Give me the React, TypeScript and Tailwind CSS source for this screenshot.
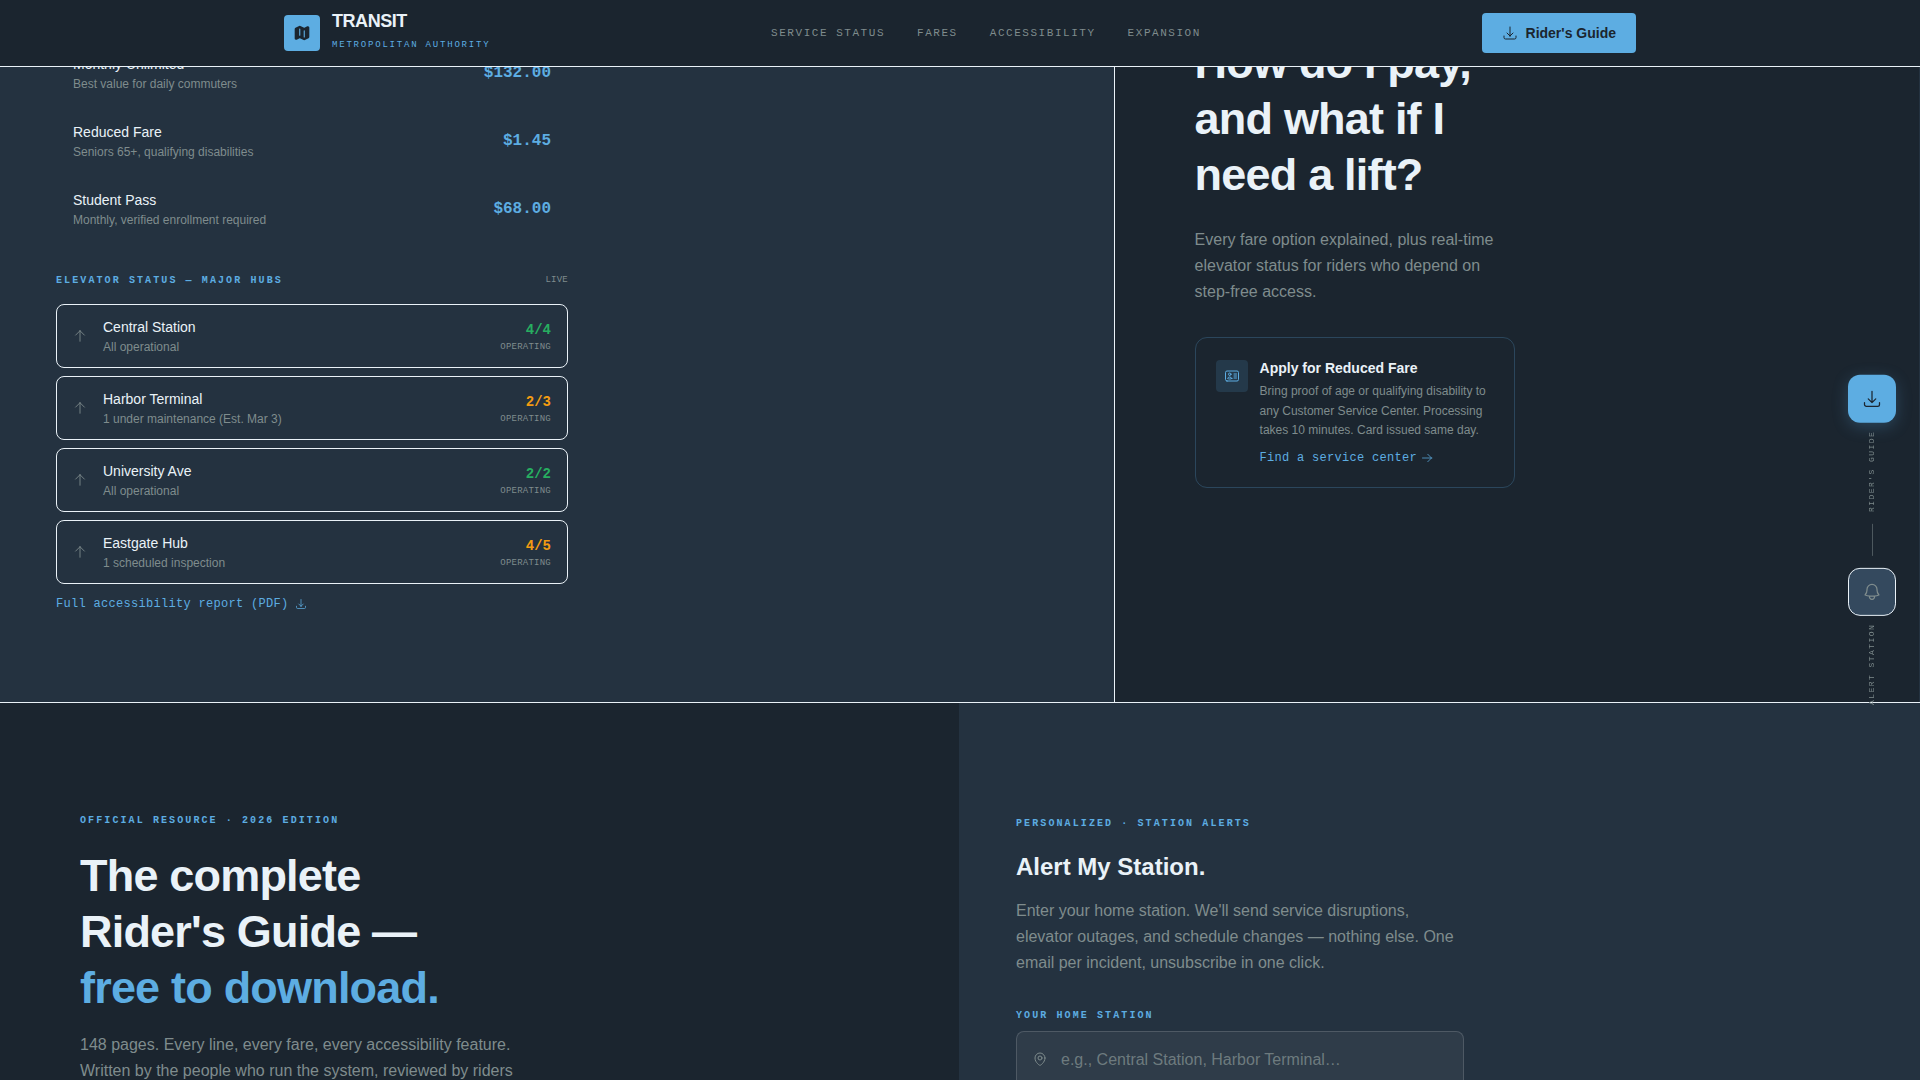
import type { ReactNode } from 'react';
import {
  HiMap,
  HiOutlineArrowDownTray,
  HiOutlineArrowRight,
  HiOutlineArrowUp,
  HiOutlineBell,
  HiOutlineIdentification,
  HiOutlineMapPin,
} from 'react-icons/hi2';

const navLinks = ['Service Status', 'Fares', 'Accessibility', 'Expansion'];

const fares = [
  { name: 'Monthly Unlimited', note: 'Best value for daily commuters', price: '$132.00' },
  { name: 'Reduced Fare', note: 'Seniors 65+, qualifying disabilities', price: '$1.45' },
  { name: 'Student Pass', note: 'Monthly, verified enrollment required', price: '$68.00' },
];

const elevators = [
  { name: 'Central Station', note: 'All operational', working: 4, total: 4 },
  { name: 'Harbor Terminal', note: '1 under maintenance (Est. Mar 3)', working: 2, total: 3 },
  { name: 'University Ave', note: 'All operational', working: 2, total: 2 },
  { name: 'Eastgate Hub', note: '1 scheduled inspection', working: 4, total: 5 },
];

function Eyebrow({ children }: { children: ReactNode }) {
  return (
    <p className="font-['Liberation_Mono',monospace] text-[10px] leading-[15px] font-bold tracking-[0.21em] text-[#5dade2] uppercase">
      {children}
    </p>
  );
}

function Header() {
  return (
    <header className="fixed inset-x-0 top-0 z-20 border-b border-[#eaf2f8] bg-[#1b252f]">
      <div className="mx-auto flex max-w-[1400px] items-center justify-between px-6 py-3">
        <a href="#top" className="flex items-center gap-3">
          <span className="flex size-9 items-center justify-center rounded bg-[#5dade2] text-[#1b252f]">
            <HiMap className="size-[18px]" />
          </span>
          <span>
            <span className="block text-lg leading-[18px] font-bold tracking-tight text-[#eaf2f8]">TRANSIT</span>
            <span className="mt-1.5 block font-['Liberation_Mono',monospace] text-[9px] leading-[18px] tracking-[0.2em] text-[#5dade2] uppercase">
              Metropolitan Authority
            </span>
          </span>
        </a>
        <nav className="flex gap-8">
          {navLinks.map((label) => (
            <a
              key={label}
              href="#top"
              className="font-['Liberation_Mono',monospace] text-[11px] leading-4 tracking-[0.14em] text-[#7f8c8d] uppercase"
            >
              {label}
            </a>
          ))}
        </nav>
        <button type="button" className="flex items-center gap-2 rounded bg-[#5dade2] px-5 py-2.5 text-sm font-bold text-[#1b252f]">
          <HiOutlineArrowDownTray className="size-4" />
          Rider's Guide
        </button>
      </div>
    </header>
  );
}

function FareSection() {
  return (
    <section className="grid grid-cols-[58fr_42fr] border-b border-[#eaf2f8]">
      <div className="bg-[#243240] px-14 pt-[41px] pb-[88px]">
        <div className="max-w-lg">
          <ul className="space-y-1">
            {fares.map((fare) => (
              <li key={fare.name} className="flex items-center justify-between rounded-lg border border-transparent px-4 py-3">
                <div>
                  <p className="text-sm text-[#eaf2f8]">{fare.name}</p>
                  <p className="mt-0.5 text-xs text-[#7f8c8d]">{fare.note}</p>
                </div>
                <span className="font-['Liberation_Mono',monospace] font-bold text-[#5dade2]">{fare.price}</span>
              </li>
            ))}
          </ul>

          <div className="mt-8 mb-4 flex items-center justify-between">
            <Eyebrow>Elevator Status — Major Hubs</Eyebrow>
            <span className="font-['Liberation_Mono',monospace] text-[9px] leading-[15px] tracking-wide text-[#7f8c8d]">LIVE</span>
          </div>
          <ul className="space-y-2">
            {elevators.map((hub) => (
              <li key={hub.name} className="flex items-center gap-4 rounded-lg border border-[#eaf2f8] px-4 py-3">
                <HiOutlineArrowUp className="size-3.5 shrink-0 text-[#7f8c8d]" />
                <div className="flex-1">
                  <p className="text-sm text-[#eaf2f8]">{hub.name}</p>
                  <p className="mt-0.5 text-xs text-[#7f8c8d]">{hub.note}</p>
                </div>
                <div className="text-right font-['Liberation_Mono',monospace]">
                  <p className={hub.working === hub.total ? 'text-sm font-bold text-[#27ae60]' : 'text-sm font-bold text-[#f39c12]'}>
                    {hub.working}/{hub.total}
                  </p>
                  <p className="mt-0.5 text-[9px] leading-[10px] tracking-wide text-[#7f8c8d]">OPERATING</p>
                </div>
              </li>
            ))}
          </ul>
          <a
            href="#report"
            className="mt-3 inline-flex items-center gap-1.5 font-['Liberation_Mono',monospace] text-xs tracking-wide text-[#5dade2]"
          >
            Full accessibility report (PDF)
            <HiOutlineArrowDownTray className="size-3" />
          </a>
        </div>
      </div>

      <div className="border-x border-l-[#eaf2f8] border-r-[#243240] px-20 pt-[35px]">
        <div className="max-w-xs">
          <h2 className="text-[45px] leading-[56px] font-bold tracking-[-0.8px] text-[#eaf2f8]">
            How do I pay, and what if I need a lift?
          </h2>
          <p className="mt-6 leading-[26px] text-[#7f8c8d]">
            Every fare option explained, plus real-time elevator status for riders who depend on step-free access.
          </p>
          <div className="mt-8 flex gap-3 rounded-xl border border-[#5dade2]/25 p-5">
            <span className="mt-0.5 flex size-8 shrink-0 items-center justify-center rounded bg-[#5dade2]/15 text-[#5dade2]">
              <HiOutlineIdentification className="size-4" />
            </span>
            <div>
              <h3 className="text-sm font-bold text-[#eaf2f8]">Apply for Reduced Fare</h3>
              <p className="mt-1 text-xs leading-relaxed text-[#7f8c8d]">
                Bring proof of age or qualifying disability to any Customer Service Center. Processing takes 10 minutes. Card
                issued same day.
              </p>
              <a
                href="#centers"
                className="mt-2 flex items-center gap-1 font-['Liberation_Mono',monospace] text-xs leading-[18px] tracking-wide text-[#5dade2]"
              >
                Find a service center
                <HiOutlineArrowRight className="size-3" />
              </a>
            </div>
          </div>
        </div>
      </div>
    </section>
  );
}

function GuideSection() {
  return (
    <section className="grid grid-cols-2">
      <div className="border-r border-[#243240] px-20 pt-[110px] pb-24">
        <Eyebrow>Official Resource · 2026 Edition</Eyebrow>
        <h2 className="mt-5 text-[45px] leading-[56px] font-bold tracking-[-0.8px] text-[#eaf2f8]">
          The complete
          <br />
          Rider's Guide —
          <br />
          <span className="text-[#5dade2]">free to download.</span>
        </h2>
        <p className="mt-4 max-w-md leading-[26px] text-[#7f8c8d]">
          148 pages. Every line, every fare, every accessibility feature. Written by the people who run the system, reviewed by
          riders
        </p>
      </div>

      <div className="bg-[#243240] px-14 pt-[113px] pb-24">
        <form className="max-w-md">
          <Eyebrow>Personalized · Station Alerts</Eyebrow>
          <h2 className="mt-5 text-2xl leading-[31px] font-bold text-[#eaf2f8]">Alert My Station.</h2>
          <p className="mt-4 leading-[26px] text-[#7f8c8d]">
            Enter your home station. We'll send service disruptions, elevator outages, and schedule changes — nothing else. One
            email per incident, unsubscribe in one click.
          </p>
          <label
            htmlFor="home-station"
            className="mt-8 mb-2 block font-['Liberation_Mono',monospace] text-[10px] leading-[15px] font-bold tracking-[0.21em] text-[#5dade2] uppercase"
          >
            Your Home Station
          </label>
          <div className="relative">
            <HiOutlineMapPin className="absolute top-5 left-4 size-4 text-[#7f8c8d]" />
            <input
              id="home-station"
              type="text"
              placeholder="e.g., Central Station, Harbor Terminal…"
              className="block w-full rounded-lg border border-white/15 bg-white/5 py-4 pr-4 pl-11 text-[#eaf2f8] placeholder:text-[#7f8c8d]/80"
            />
          </div>
        </form>
      </div>
    </section>
  );
}

function SideActions() {
  return (
    <aside className="fixed top-1/2 right-6 z-10 flex -translate-y-1/2 flex-col items-center gap-3">
      <div className="flex flex-col items-center gap-2">
        <button
          type="button"
          aria-labelledby="side-guide"
          className="flex size-12 items-center justify-center rounded-xl bg-[#5dade2] text-[#1b252f] shadow-[0_4px_16px_rgba(93,173,226,0.25)]"
        >
          <HiOutlineArrowDownTray className="size-5" />
        </button>
        <span
          id="side-guide"
          className="rotate-180 font-['Liberation_Mono',monospace] text-[8px] leading-3 tracking-[0.18em] text-[#7f8c8d] [writing-mode:vertical-rl]"
        >
          RIDER'S GUIDE
        </span>
      </div>
      <div className="h-8 w-px bg-[#7f8c8d]/50" />
      <div className="flex flex-col items-center gap-2">
        <button
          type="button"
          aria-labelledby="side-alert"
          className="flex size-12 items-center justify-center rounded-xl border border-[#eaf2f8] bg-[#34495e] text-[#7f8c8d]"
        >
          <HiOutlineBell className="size-5" />
        </button>
        <span
          id="side-alert"
          className="rotate-180 font-['Liberation_Mono',monospace] text-[8px] leading-3 tracking-[0.18em] text-[#7f8c8d] [writing-mode:vertical-rl]"
        >
          ALERT STATION
        </span>
      </div>
    </aside>
  );
}

export default function App() {
  return (
    <div id="top" className="min-h-screen bg-[#1b252f] font-['Liberation_Sans',sans-serif]">
      <Header />
      <main>
        <FareSection />
        <GuideSection />
      </main>
      <SideActions />
    </div>
  );
}
